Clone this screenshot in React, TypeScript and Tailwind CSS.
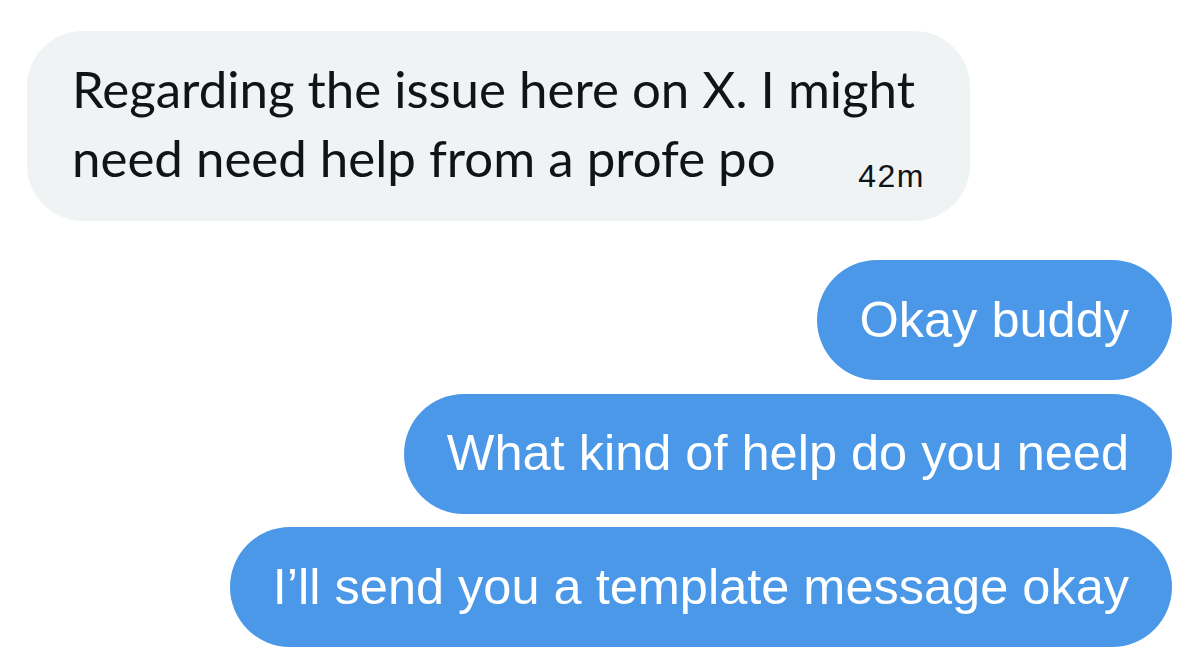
import React from "react";

export default function App() {
  const blue = "flex h-[120px] items-center rounded-full bg-[#4a98e7] px-[43px] text-[50.5px] leading-none text-white";
  return (
    <div className="flex h-[660px] w-[1200px] flex-col bg-white pl-[27px] pr-[28px] pt-[31px]" style={{ fontFamily: "'Liberation Sans', Arial, sans-serif" }}>
      <div className="w-[943px] rounded-[56px] bg-[#eff3f4] pb-[29px] pl-[45px] pr-[45px] pt-[23px] text-[#0f1419]">
        <div className="text-[51px] leading-[69px]" style={{ fontFamily: "Lato, 'Liberation Sans', sans-serif" }}>
          Regarding the issue here on X. I might
        </div>
        <div className="flex items-end justify-between">
          <span className="text-[51px] leading-[69px]" style={{ fontFamily: "Lato, 'Liberation Sans', sans-serif" }}>
            need need help from a profe po
          </span>
          <span className="text-[32px] leading-none tracking-[1.5px]">42m</span>
        </div>
      </div>
      <div className="mt-[39px] flex flex-col items-end gap-[13.5px]">
        <div className={blue}>Okay buddy</div>
        <div className={blue}>What kind of help do you need</div>
        <div className={blue}>I’ll send you a template message okay</div>
      </div>
    </div>
  );
}
